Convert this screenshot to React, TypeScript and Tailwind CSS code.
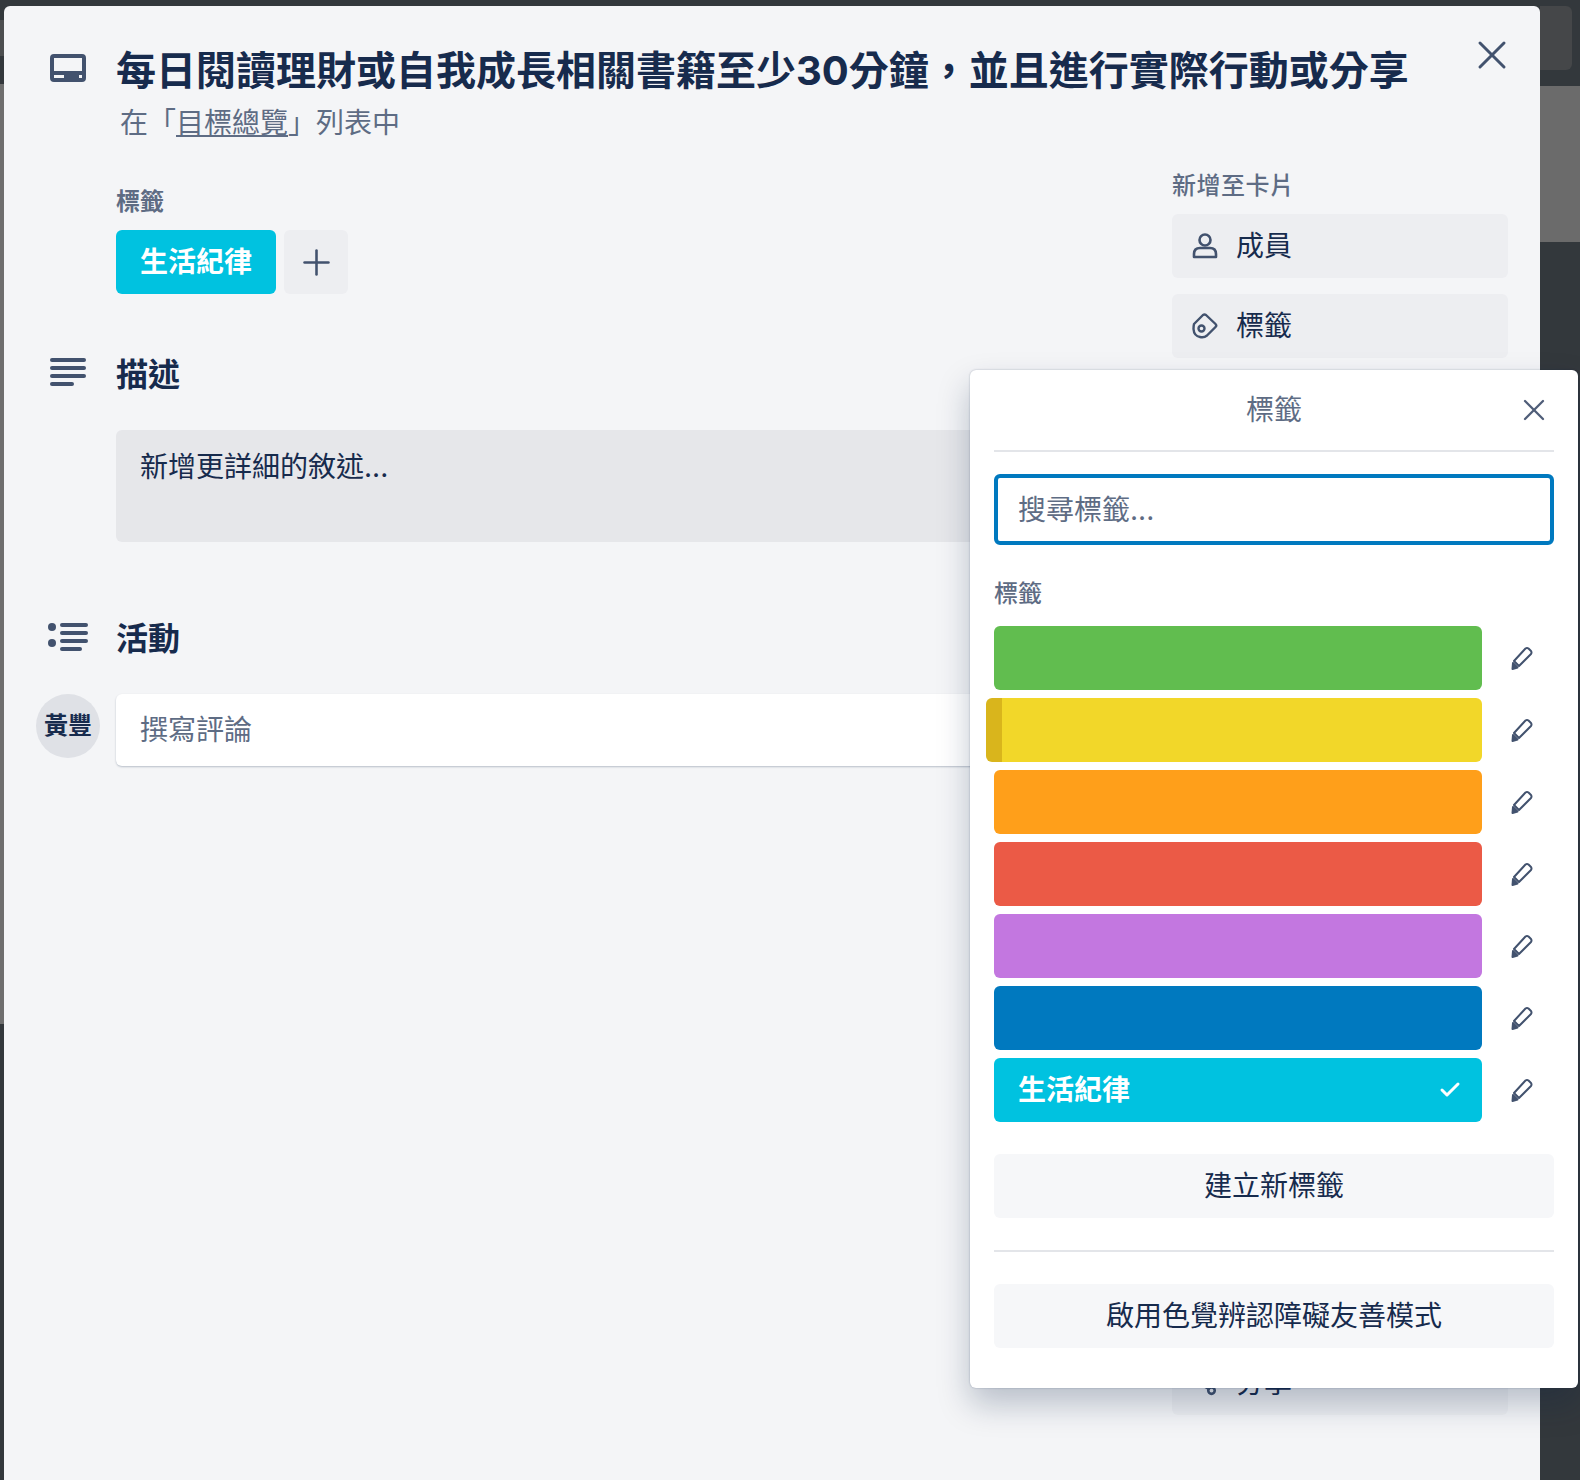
import { Check, Plus, Share2, X } from "lucide-react";

const LABEL_COLORS = ["bg-[#61bd4f]", "bg-[#f2d729]", "bg-[#ff9f1a]", "bg-[#eb5a46]", "bg-[#c377e0]", "bg-[#0079bf]"];

function TagIcon() {
  return (
    <svg width="26" height="26" viewBox="0 0 26 26" fill="none" stroke="#42526e" strokeWidth="2.4" strokeLinejoin="round">
      <path d="M2 11 L11 2 Q12.5 1 14 2 L23.5 11 Q25 12.5 23.5 14 L15 22.5 Q12 25 8 24 Q2 23 1.5 16 Q1.5 13 2 11 Z" />
      <circle cx="9.5" cy="15.5" r="3" />
    </svg>
  );
}

function PersonIcon() {
  return (
    <svg width="26" height="26" viewBox="0 0 26 26" fill="none" stroke="#42526e" strokeWidth="2.6" strokeLinejoin="round">
      <circle cx="13" cy="7" r="5.5" />
      <path d="M2 24 V21 Q2 15 8 15 H18 Q24 15 24 21 V24 Z" />
    </svg>
  );
}

function PencilIcon() {
  return (
    <svg className="ml-[28px]" width="24" height="26" viewBox="0 0 24 26" fill="none" stroke="#42526e" strokeWidth="2" strokeLinejoin="round">
      <path d="M4 16 L15.5 3.5 Q17 2.5 18.5 3.5 L21 6 Q22 7.5 21 9 L9 21 Z" />
      <path d="M2.5 24 L3 18 L7.5 22.5 Z" fill="#42526e" />
    </svg>
  );
}

function LabelPopover() {
  return (
    <div className="absolute left-[970px] top-[370px] z-10 h-[1018px] w-[608px] rounded-md bg-white px-6 shadow-[0_16px_32px_rgba(9,30,66,0.25),0_0_2px_rgba(9,30,66,0.3)]">
      <div className="relative flex h-[82px] items-center justify-center border-b-2 border-[#e3e5e9] text-[28px] text-[#5e6c84]">
        標籤
        <X className="absolute right-[2px] top-[22px] text-[#4f5d78]" size={36} strokeWidth={1.5} />
      </div>
      <div className="mt-[22px] flex h-[71px] items-center rounded-md border-4 border-[#0079bf] px-5 text-[28px] text-[#5e6c84]">搜尋標籤...</div>
      <div className="mt-[33px] h-[32px] text-2xl font-medium leading-8 text-[#5e6c84]">標籤</div>
      <div className="mt-[16px] flex flex-col gap-2">
        {LABEL_COLORS.map((color, i) => (
          <div key={color} className="flex items-center">
            <div className={`relative h-16 w-[488px] rounded-md ${color}`}>
              {i === 1 && <div className="absolute -left-2 top-0 h-16 w-4 rounded-l-md bg-[#d9b51c]" />}
            </div>
            <PencilIcon />
          </div>
        ))}
        <div className="flex items-center">
          <div className="flex h-16 w-[488px] items-center justify-between rounded-md bg-[#00c2e0] pl-6 pr-5 text-[28px] font-bold text-white">
            生活紀律
            <Check size={24} strokeWidth={3} />
          </div>
          <PencilIcon />
        </div>
      </div>
      <div className="mt-[32px] flex h-16 items-center justify-center rounded-md bg-[#f6f7f9] text-[28px] text-[#172b4d]">建立新標籤</div>
      <div className="mt-[32px] border-t-2 border-[#e3e5e9]" />
      <div className="mt-[32px] flex h-16 items-center justify-center rounded-md bg-[#f6f7f9] text-[28px] text-[#172b4d]">啟用色覺辨認障礙友善模式</div>
    </div>
  );
}

export default function App() {
  return (
    <div className="relative h-[1480px] w-[1580px] overflow-hidden bg-[#33383c] font-['Inter','Noto_Sans_CJK_TC',sans-serif]">
      <div className="flex h-full">
        {/* Board peeking out on the left */}
        <div className="w-1">
          <div className="mt-[20px] h-[36px] bg-[#4c4e50]" />
          <div className="mt-[28px] h-[940px] bg-[#6e6e6e]" />
        </div>
        <div className="mt-[6px] flex w-[1536px] justify-between rounded-t-md bg-[#f4f5f7] pl-[112px] pr-8">
          {/* Main column */}
          <div className="relative w-[1000px]">
            <svg className="absolute -left-[66px] top-[48px]" width="36" height="28" viewBox="0 0 36 28">
              <path fillRule="evenodd" fill="#42526e" d="M4 0h28a4 4 0 0 1 4 4v20a4 4 0 0 1-4 4H4a4 4 0 0 1-4-4V4a4 4 0 0 1 4-4zm0 4v13h28V4zm0 17v3h10v-3zm25 0v3h3v-3z" />
            </svg>
            <h1 className="mt-[35px] w-[1320px] whitespace-nowrap text-[40px] font-bold leading-[60px] text-[#172b4d]">每日閱讀理財或自我成長相關書籍至少30分鐘，並且進行實際行動或分享</h1>
            <div className="mt-[4px] pl-1 text-[28px] leading-9 text-[#5e6c84]">
              在「<span className="underline">目標總覽</span>」列表中
            </div>
            <div className="mt-[45px] text-2xl font-semibold leading-8 text-[#5e6c84]">標籤</div>
            <div className="mt-[12px] flex gap-2">
              <div className="flex h-16 w-40 items-center justify-center rounded-md bg-[#00c2e0] text-[28px] font-bold text-white">生活紀律</div>
              <div className="flex size-16 items-center justify-center rounded-md bg-[#edeef1]">
                <Plus className="text-[#42526e]" size={41} strokeWidth={1.5} />
              </div>
            </div>
            <div className="relative mt-[57px] h-[48px] text-[32px] font-bold leading-[48px] text-[#172b4d]">
              <svg className="absolute -left-[66px] top-[7px]" width="36" height="30" viewBox="0 0 36 30" fill="#42526e">
                <rect width="36" height="4" rx="2" />
                <rect y="8" width="36" height="4" rx="2" />
                <rect y="16" width="36" height="4" rx="2" />
                <rect y="24" width="24" height="4" rx="2" />
              </svg>
              描述
            </div>
            <div className="mt-[31px] h-28 rounded-md bg-[#e6e7ea] px-6 pt-[19px] text-[28px] leading-9 text-[#172b4d]">新增更詳細的敘述...</div>
            <div className="relative mt-[73px] h-[48px] text-[32px] font-bold leading-[48px] text-[#172b4d]">
              <svg className="absolute -left-[68px] top-[8px]" width="40" height="30" viewBox="0 0 40 30" fill="#42526e">
                <circle cx="4" cy="4" r="4" />
                <circle cx="4" cy="20" r="4" />
                <rect x="12" y="0" width="28" height="4" rx="2" />
                <rect x="12" y="8" width="28" height="4" rx="2" />
                <rect x="12" y="16" width="28" height="4" rx="2" />
                <rect x="12" y="24" width="22" height="4" rx="2" />
              </svg>
              活動
            </div>
            <div className="relative mt-[31px] flex h-[72px] items-center rounded-md bg-white px-6 text-[28px] text-[#5e6c84] shadow-[0_1px_2px_rgba(9,30,66,0.25)]">
              撰寫評論
              <div className="absolute -left-[80px] top-0 flex size-16 items-center justify-center rounded-full bg-[#dfe1e6] text-2xl font-bold text-[#172b4d]">黃豐</div>
            </div>
          </div>
          {/* Sidebar */}
          <div className="w-[336px]">
            <div className="mt-[164px] text-2xl font-medium leading-8 tracking-[0.5px] text-[#5e6c84]">新增至卡片</div>
            <div className="mt-[12px] flex flex-col gap-4">
              <div className="flex h-16 items-center gap-[18px] rounded-md bg-[#edeef1] pl-5 text-[28px] text-[#172b4d]">
                <PersonIcon />
                成員
              </div>
              <div className="flex h-16 items-center gap-[18px] rounded-md bg-[#edeef1] pl-5 text-[28px] text-[#172b4d]">
                <TagIcon />
                標籤
              </div>
              <div className="mt-[977px] flex h-16 items-center gap-[18px] rounded-md bg-[#edeef1] pl-5 text-[28px] text-[#172b4d]">
                <Share2 className="text-[#42526e]" size={26} strokeWidth={2.4} />
                分享
              </div>
            </div>
          </div>
        </div>
        {/* Board peeking out on the right */}
        <div className="flex-1">
          <div className="mt-[6px] h-16 w-8 rounded-r-md bg-[#454749]" />
          <div className="mt-[16px] h-[156px] bg-[#6b6b6b]" />
        </div>
      </div>
      <X className="absolute left-[1468px] top-[31px] text-[#42526e]" size={48} strokeWidth={1.5} />
      <LabelPopover />
    </div>
  );
}
